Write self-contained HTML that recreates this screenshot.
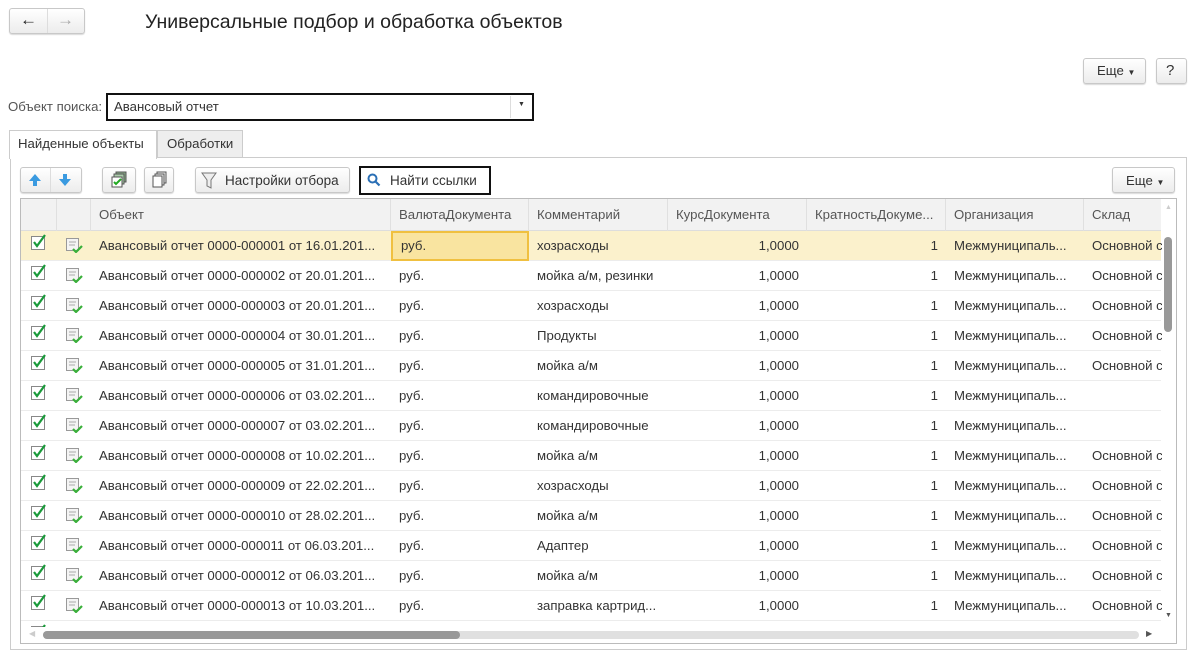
<!DOCTYPE html>
<html><head><meta charset="utf-8"><style>
*{box-sizing:border-box;margin:0;padding:0}
body{width:1200px;height:655px;background:#fff;font-family:"Liberation Sans",sans-serif;font-size:13.2px;color:#333;position:relative;overflow:hidden}
.a{position:absolute}
.btn{position:absolute;border:1px solid #c8c8c8;border-radius:3px;background:linear-gradient(#fff,#ececec);box-shadow:0 1px 1px rgba(0,0,0,.15)}
.c{position:absolute;top:0;height:30px;line-height:30px;white-space:nowrap;overflow:hidden;padding:0 8px}
.hd .c{border-right:1px solid #e0e0e0}
.row{position:absolute;left:0;width:1140px;height:30px;border-bottom:1px solid #ececec}
.r{text-align:right}
</style></head><body>
<div class="btn" style="left:9px;top:8px;width:76px;height:26px"></div>
<div class="a" style="left:47px;top:9px;width:1px;height:24px;background:#ddd"></div>
<div class="a" style="left:20px;top:10px;font-size:17px;color:#222;font-weight:bold">&#8592;</div>
<div class="a" style="left:57px;top:10px;font-size:17px;color:#aaa">&#8594;</div>
<div class="a" style="left:145px;top:11px;font-size:19.5px;color:#222">Универсальные подбор и обработка объектов</div>
<div class="btn" style="left:1083px;top:58px;width:63px;height:26px"></div>
<div class="a" style="left:1097px;top:63px">Еще <span style="font-size:8px">▼</span></div>
<div class="btn" style="left:1156px;top:58px;width:31px;height:26px"></div>
<div class="a" style="left:1166px;top:62px;font-size:15px">?</div>
<div class="a" style="left:8px;top:99px;color:#555">Объект поиска:</div>
<div class="a" style="left:106px;top:93px;width:428px;height:28px;border:2px solid #111"></div>
<div class="a" style="left:114px;top:99px">Авансовый отчет</div>
<div class="a" style="left:510px;top:96px;width:1px;height:22px;background:#ddd"></div>
<div class="a" style="left:518px;top:101px;font-size:7px">▼</div>
<div class="a" style="left:157px;top:130px;width:86px;height:28px;border:1px solid #ccc;background:#eee"></div>
<div class="a" style="left:167px;top:136px">Обработки</div>
<div class="a" style="left:9px;top:130px;width:148px;height:29px;border:1px solid #ccc;border-bottom:none;background:#fff;z-index:2"></div>
<div class="a" style="left:18px;top:136px;z-index:3">Найденные объекты</div>
<div class="a" style="left:10px;top:157px;width:1177px;height:493px;border:1px solid #ccc"></div>
<div class="btn" style="left:20px;top:167px;width:62px;height:26px"></div>
<div class="a" style="left:50px;top:168px;width:1px;height:24px;background:#ddd"></div>
<svg class="a" style="left:27px;top:172px" width="16" height="16"><path d="M8 2L2 9h4v5h4V9h4z" fill="#3a9ae0"/></svg>
<svg class="a" style="left:57px;top:172px" width="16" height="16"><path d="M8 14L2 7h4V2h4v5h4z" fill="#3a9ae0"/></svg>
<div class="btn" style="left:102px;top:167px;width:34px;height:26px"></div>
<svg class="a" style="left:110px;top:171px" width="18" height="18"><rect x="6" y="1" width="10" height="10" fill="#8a8" stroke="#555"/><rect x="4" y="3" width="10" height="10" fill="#aca" stroke="#555"/><rect x="2" y="6" width="10" height="10" fill="#fff" stroke="#555"/><path d="M4 11l2 2 5-5" stroke="#2a2" stroke-width="2" fill="none"/></svg>
<div class="btn" style="left:144px;top:167px;width:30px;height:26px"></div>
<svg class="a" style="left:151px;top:171px" width="18" height="18"><rect x="6" y="1" width="9" height="11" fill="#eee" stroke="#555"/><rect x="4" y="3" width="9" height="11" fill="#eee" stroke="#555"/><rect x="2" y="5" width="9" height="11" fill="#fff" stroke="#555"/></svg>
<div class="btn" style="left:195px;top:167px;width:155px;height:26px"></div>
<svg class="a" style="left:201px;top:171px" width="16" height="18"><path d="M1 2h14l-5 7v8l-4-2V9z" fill="#eee" stroke="#777"/></svg>
<div class="a" style="left:225px;top:173px;font-size:13.5px">Настройки отбора</div>
<div class="a" style="left:359px;top:166px;width:132px;height:29px;border:2px solid #111;background:#fff"></div>
<svg class="a" style="left:367px;top:173px" width="14" height="14"><circle cx="5.5" cy="5.5" r="4" stroke="#2a6fb5" stroke-width="2" fill="none"/><path d="M8.5 8.5l4 4" stroke="#2a6fb5" stroke-width="2.2"/></svg>
<div class="a" style="left:390px;top:173px;font-size:13.5px">Найти ссылки</div>
<div class="btn" style="left:1112px;top:167px;width:63px;height:26px"></div>
<div class="a" style="left:1126px;top:173px">Еще <span style="font-size:8px">▼</span></div>
<div class="a" style="left:20px;top:198px;width:1157px;height:446px;border:1px solid #bbb;overflow:hidden">
<div class="a hd" style="left:0;top:0;width:1140px;height:32px;background:#f2f2f2;border-bottom:1px solid #ddd">
<div class="c" style="left:0;width:36px;height:32px"></div><div class="c" style="left:36px;width:34px;height:32px"></div>
<div class="c" style="left:70px;width:300px;height:32px;line-height:32px;color:#555">Объект</div>
<div class="c" style="left:370px;width:138px;height:32px;line-height:32px;color:#555">ВалютаДокумента</div>
<div class="c" style="left:508px;width:139px;height:32px;line-height:32px;color:#555">Комментарий</div>
<div class="c" style="left:647px;width:139px;height:32px;line-height:32px;color:#555">КурсДокумента</div>
<div class="c" style="left:786px;width:139px;height:32px;line-height:32px;color:#555">КратностьДокуме...</div>
<div class="c" style="left:925px;width:138px;height:32px;line-height:32px;color:#555">Организация</div>
<div class="c" style="left:1063px;width:80px;height:32px;line-height:32px;color:#555">Склад</div>
</div>
<div id="rows"></div>
<div class="a" style="left:1141px;top:0;width:15px;height:430px;background:#fff"></div>
<div class="a" style="left:1144px;top:5px;font-size:7px;color:#ccc">▲</div>
<div class="a" style="left:1143px;top:38px;width:8px;height:95px;background:#999;border-radius:4px"></div>
<div class="a" style="left:1144px;top:413px;font-size:7px;color:#555">▼</div>
<div class="a" style="left:0;top:428px;width:1156px;height:17px;background:#fff"></div>
<div class="a" style="left:22px;top:432px;width:1096px;height:8px;background:#e0e0e0;border-radius:4px"></div>
<div class="a" style="left:22px;top:432px;width:417px;height:8px;background:#999;border-radius:4px"></div>
<div class="a" style="left:1125px;top:430px;font-size:8px;color:#555">▶</div>
<div class="a" style="left:8px;top:430px;font-size:8px;color:#ccc">◀</div>
</div>
<script>
var d=[["01","16.01","хозрасходы",1],["02","20.01","мойка а/м, резинки",1],["03","20.01","хозрасходы",1],["04","30.01","Продукты",1],["05","31.01","мойка а/м",1],["06","03.02","командировочные",0],["07","03.02","командировочные",0],["08","10.02","мойка а/м",1],["09","22.02","хозрасходы",1],["10","28.02","мойка а/м",1],["11","06.03","Адаптер",1],["12","06.03","мойка а/м",1],["13","10.03","заправка картрид...",1],["14","","",0]];
var h="";
var chk='<svg width="16" height="16"><rect x="0.5" y="2.5" width="13" height="13" fill="#fff" stroke="#888"/><path d="M3 8l3 4 8-11" stroke="#1a9a3a" stroke-width="2.2" fill="none"/></svg>';
var doc='<svg width="18" height="16"><rect x="1.5" y="1.5" width="12" height="12" fill="#f4f4f4" stroke="#999"/><path d="M4 5h7M4 8h6" stroke="#aaa"/><path d="M8 12l3 3 6-6" stroke="#3ab03a" stroke-width="2.2" fill="none"/></svg>';
d.forEach(function(r,i){var t=32+i*30,s=i==0;
h+='<div class="row" style="top:'+t+'px;background:'+(s?'#fbf1cc':'#fff')+'">'+
'<div class="c" style="left:0;width:36px;padding:3px 0 0 10px;line-height:normal">'+chk+'</div>'+
'<div class="c" style="left:36px;width:34px;padding:6px 0 0 8px;line-height:normal">'+doc+'</div>'+
'<div class="c" style="left:70px;width:300px">Авансовый отчет 0000-0000'+r[0]+' от '+r[1]+'.201...</div>'+
'<div class="c" style="left:370px;width:138px;'+(s?'background:#f9e4a0;border:2px solid #f0c040;line-height:26px':'')+'">руб.</div>'+
'<div class="c" style="left:508px;width:139px">'+r[2]+'</div>'+
'<div class="c r" style="left:647px;width:139px">1,0000</div>'+
'<div class="c r" style="left:786px;width:139px">1</div>'+
'<div class="c" style="left:925px;width:138px">Межмуниципаль...</div>'+
'<div class="c" style="left:1063px;width:80px">'+(r[3]?'Основной с':'')+'</div></div>';});
document.getElementById('rows').innerHTML=h;
</script>
</body></html>
